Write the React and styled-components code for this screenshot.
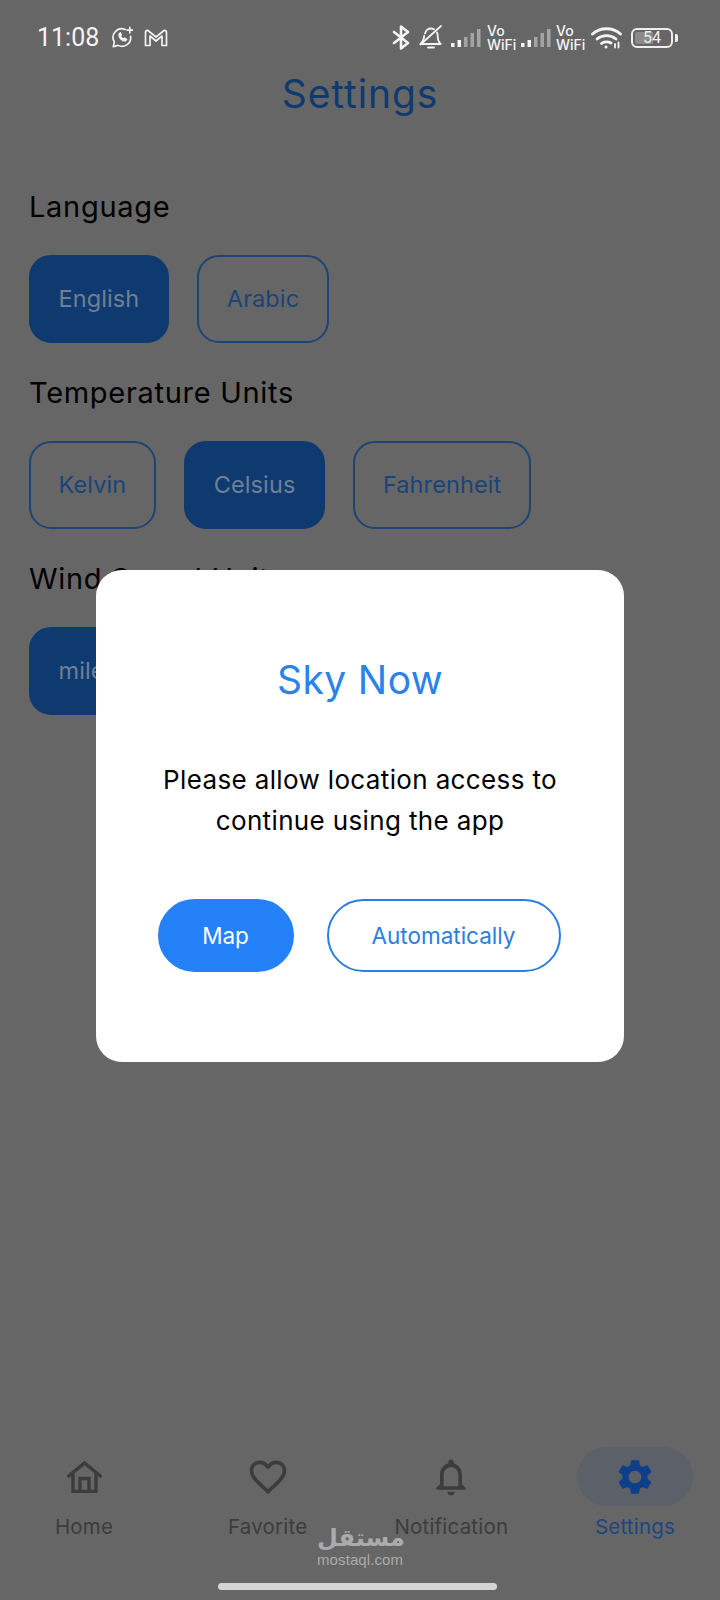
import React from "react";
import styled, { createGlobalStyle } from "styled-components";
import { MdFavoriteBorder, MdOutlineNotifications, MdSettings } from "react-icons/md";

const Global = createGlobalStyle`
  html, body { margin: 0; padding: 0; background: #666; }
  * { box-sizing: border-box; }
`;

const font = `Inter, "Noto Sans", sans-serif`;

const Screen = styled.div`
  position: relative;
  width: 720px;
  height: 1600px;
  overflow: hidden;
  background: #666;
  display: flex;
  flex-direction: column;
  font-family: ${font};
`;

const StatusBar = styled.div`
  height: 72px;
  padding: 25px 42px 0 37px;
  display: flex;
  justify-content: space-between;
  align-items: flex-start;
  color: #f4f4f4;
`;
const StatusGroup = styled.div`
  display: flex;
  align-items: center;
  height: 25px;
`;
const Time = styled.span`
  width: 74px;
  font: 400 25px/25px Roboto, sans-serif;
  letter-spacing: 0;
`;
const Glyph = styled.svg`
  display: block;
  flex: none;
  margin-right: ${(p) => p.$gap || 0}px;
`;
const VoWifi = styled.span`
  font: 500 14px/14px Inter, sans-serif;
  width: 28px;
  margin-right: ${(p) => p.$gap || 0}px;
  color: #f4f4f4;
  white-space: nowrap;
`;
const Battery = styled.div`
  position: relative;
  width: 42px;
  height: 20px;
  border: 2px solid #eee;
  border-radius: 6px;
  margin-right: 2px;
  display: flex;
  align-items: center;
  justify-content: center;
  font: 400 16px/1 Roboto, sans-serif;
  color: #eee;
  background: linear-gradient(to right, #8a8a8a 54%, transparent 54%) content-box;
  padding: 2px;
`;
const BatteryNub = styled.span`
  width: 3px;
  height: 8px;
  border-radius: 0 2px 2px 0;
  background: #eee;
`;

const Title = styled.h1`
  margin: 0;
  height: 44px;
  text-align: center;
  font: 400 39px/44px ${font};
  letter-spacing: 0.9px;
  color: #0f3a70;
`;

const Content = styled.main`
  margin-top: 71px;
  padding: 0 29px;
  display: flex;
  flex-direction: column;
  gap: 30px;
`;
const Section = styled.section`
  display: flex;
  flex-direction: column;
  gap: 28px;
`;
const Label = styled.h2`
  margin: 0;
  height: 40px;
  font: 400 29px/40px ${font};
  letter-spacing: 0.7px;
  color: #000;
`;
const Options = styled.div`
  display: flex;
  gap: 28.500px;
`;
const Option = styled.div`
  height: 88px;
  border-radius: 22px;
  border: 2px solid ${(p) => (p.$active ? "#0f3a70" : "#1d4477")};
  background: ${(p) => (p.$active ? "#0f3a70" : "transparent")};
  color: ${(p) => (p.$active ? "#6d8098" : "#194479")};
  font: 400 23.500px/84px ${font};
  letter-spacing: 0.1px;
  padding: 0 27.500px;
  white-space: nowrap;
`;

const Layer = styled.div`
  position: absolute;
  inset: 0;
  display: flex;
  justify-content: center;
  align-items: flex-start;
  padding-top: 570px;
`;
const Dialog = styled.div`
  width: 528px;
  height: 492px;
  background: #fff;
  border-radius: 26px;
  display: flex;
  flex-direction: column;
  align-items: center;
  padding-top: 83px;
`;
const DialogTitle = styled.h3`
  margin: 0;
  font: 400 39px/54px ${font};
  letter-spacing: 0.4px;
  color: #2a84e8;
`;
const DialogText = styled.p`
  margin: 52px 0 0;
  text-align: center;
  font: 400 26px/41px ${font};
  letter-spacing: 0.36px;
  color: #000;
`;
const DialogActions = styled.div`
  margin: 58px 2px 0 0;
  display: flex;
  gap: 33px;
`;
const Action = styled.div`
  height: 73px;
  width: ${(p) => p.$w}px;
  border-radius: 37px;
  border: 2px solid ${(p) => (p.$primary ? "#2481f7" : "#2a7fe0")};
  background: ${(p) => (p.$primary ? "#2481f7" : "#fff")};
  color: ${(p) => (p.$primary ? "#fff" : "#2a7fe0")};
  font: 400 22.500px/69px ${font};
  text-align: center;
`;

const Nav = styled.nav`
  margin-top: auto;
  margin-bottom: 58px;
  padding: 0 27px 0 26px;
  display: flex;
  justify-content: space-between;
`;
const NavItem = styled.div`
  width: 116px;
  display: flex;
  flex-direction: column;
  align-items: center;
  gap: 6px;
  color: ${(p) => (p.$active ? "#0d4088" : "#3c3c3c")};
`;
const NavIcon = styled.div`
  width: 116px;
  height: 59px;
  border-radius: 30px;
  display: flex;
  align-items: center;
  justify-content: center;
  background: ${(p) => (p.$active ? "#5c6068" : "transparent")};
`;
const NavLabel = styled.span`
  font: 400 20.500px/30px ${font};
  letter-spacing: 0.2px;
  white-space: nowrap;
  color: ${(p) => (p.$active ? "#1c4680" : "#3c3c3c")};
`;

const Indicator = styled.div`
  position: absolute;
  left: 218px;
  bottom: 10px;
  width: 279px;
  height: 7px;
  border-radius: 4px;
  background: #d4d4d4;
`;
const Watermark = styled.div`
  position: absolute;
  left: 317px;
  top: 1524px;
  width: 86px;
  text-align: center;
  color: #ababab;
`;
const WatermarkAr = styled.div`
  font: 700 24px/28px "DejaVu Sans", sans-serif;
`;
const WatermarkEn = styled.div`
  font: 400 15px/16px "Liberation Sans", sans-serif;
  letter-spacing: 0.1px;
`;

const WhatsApp = () => (
  <Glyph $gap={11} width="22" height="23" viewBox="0 0 24 24" fill="none" stroke="#f4f4f4" strokeWidth="1.800" strokeLinejoin="round" strokeLinecap="round">
    <path d="M15.500 3.200A9.500 9.500 0 0 0 3.600 16.800L2.500 22l5.200-1.400A9.500 9.500 0 0 0 21.400 10.800" />
    <path d="M8.600 8.200c-.5 4 3.400 8 7.400 7.600l1.200-2-2.600-1.400-1.100 1.100c-1.400-.7-2.500-1.800-3.100-3.200l1-1.100-1.200-2.600z" strokeWidth="1.200" fill="#f4f4f4" />
    <path d="M20.500 1v6M17.500 4h6" />
  </Glyph>
);
const Gmail = () => (
  <Glyph width="24" height="18" viewBox="0 0 24 18" fill="none" stroke="#f4f4f4" strokeWidth="1.700" strokeLinejoin="round">
    <path d="M1.500 16.500V3.500Q1.500 1 4 1.500L12 8l8-6.500q2.500-.5 2.500 2v13H18V7l-6 5-6-5v9.500z" />
  </Glyph>
);
const Bluetooth = () => (
  <Glyph $gap={9} width="18" height="25" viewBox="0 0 18 25" fill="none" stroke="#f4f4f4" strokeWidth="2.600" strokeLinejoin="round" strokeLinecap="round">
    <path d="M2 7l14 11-7 5.500V1.500L16 7 2 18" />
  </Glyph>
);
const BellOff = () => (
  <Glyph $gap={8} width="24" height="25" viewBox="0 0 24 25" fill="none" stroke="#f4f4f4" strokeWidth="1.800" strokeLinejoin="round" strokeLinecap="round">
    <path d="M6 8.500c1-3.500 3.500-5 6-5 1 0 2 .3 3 .8M18 7.500c.5 1 .7 2 .7 3.500 0 4 .8 6 3 8H1.500c2.800-2.500 3.500-5 3.700-8" />
    <path d="M9 22.500h6" />
    <path d="M1.500 19.500L22 1" />
  </Glyph>
);
const Signal = ({ gap }) => (
  <Glyph $gap={gap} width="30" height="18" viewBox="0 0 30 18">
    <rect x="0" y="14" width="3.500" height="4" fill="#f4f4f4" />
    <rect x="6.500" y="11" width="3.500" height="7" fill="#f4f4f4" />
    <rect x="13" y="8" width="3.500" height="10" fill="#a4a4a4" />
    <rect x="19.500" y="4" width="3.500" height="14" fill="#a4a4a4" />
    <rect x="26" y="0" width="3.500" height="18" fill="#a4a4a4" />
  </Glyph>
);
const Wifi = () => (
  <Glyph $gap={9} width="31" height="23" viewBox="0 0 31 23" fill="none" stroke="#f4f4f4" strokeWidth="2.800" strokeLinecap="round">
    <path d="M1.500 8C9 1 22 1 29.500 8" />
    <path d="M6 13c5.500-4.500 13.500-4.500 19 0" />
    <path d="M10.500 17.500c2.500-2 7-2 9.500-.5" />
    <circle cx="15" cy="21" r="1.500" fill="#f4f4f4" stroke="none" />
    <path d="M24 18v3.500M27.500 16.500v5" strokeWidth="1.800" />
  </Glyph>
);
const HomeIcon = () => (
  <svg width="35" height="32" viewBox="0 0 35 32" fill="none" stroke="#3c3c3c" strokeWidth="3.400">
    <path d="M0.500 16L17.500 2l17 14" />
    <path d="M6 12.500V30.500h23V12.500" />
    <path d="M13 30.500V17.500h9v13" />
  </svg>
);

const options = [
  { label: "Language", items: [["English", true], ["Arabic", false]] },
  { label: "Temperature Units", items: [["Kelvin", false], ["Celsius", true], ["Fahrenheit", false]] },
  { label: "Wind Speed Units", items: [["miles/hour", true], ["meters/sec", false]] },
];

export default function App() {
  return (
    <Screen>
      <Global />
      <StatusBar>
        <StatusGroup>
          <Time>11:08</Time>
          <WhatsApp />
          <Gmail />
        </StatusGroup>
        <StatusGroup>
          <Bluetooth />
          <BellOff />
          <Signal gap={6} />
          <VoWifi $gap={6}>Vo<br />WiFi</VoWifi>
          <Signal gap={5} />
          <VoWifi $gap={7}>Vo<br />WiFi</VoWifi>
          <Wifi />
          <Battery>54</Battery>
          <BatteryNub />
        </StatusGroup>
      </StatusBar>
      <Title>Settings</Title>
      <Content>
        {options.map((s) => (
          <Section key={s.label}>
            <Label>{s.label}</Label>
            <Options>
              {s.items.map(([name, active]) => (
                <Option key={name} $active={active}>{name}</Option>
              ))}
            </Options>
          </Section>
        ))}
      </Content>
      <Nav>
        <NavItem>
          <NavIcon><HomeIcon /></NavIcon>
          <NavLabel>Home</NavLabel>
        </NavItem>
        <NavItem>
          <NavIcon><MdFavoriteBorder size={44} /></NavIcon>
          <NavLabel>Favorite</NavLabel>
        </NavItem>
        <NavItem>
          <NavIcon><MdOutlineNotifications size={44} /></NavIcon>
          <NavLabel>Notification</NavLabel>
        </NavItem>
        <NavItem $active>
          <NavIcon $active><MdSettings size={42} /></NavIcon>
          <NavLabel $active>Settings</NavLabel>
        </NavItem>
      </Nav>
      <Watermark>
        <WatermarkAr>مستقل</WatermarkAr>
        <WatermarkEn>mostaql.com</WatermarkEn>
      </Watermark>
      <Indicator />
      <Layer>
        <Dialog>
          <DialogTitle>Sky Now</DialogTitle>
          <DialogText>Please allow location access to<br />continue using the app</DialogText>
          <DialogActions>
            <Action $primary $w={136}>Map</Action>
            <Action $w={234}>Automatically</Action>
          </DialogActions>
        </Dialog>
      </Layer>
    </Screen>
  );
}
